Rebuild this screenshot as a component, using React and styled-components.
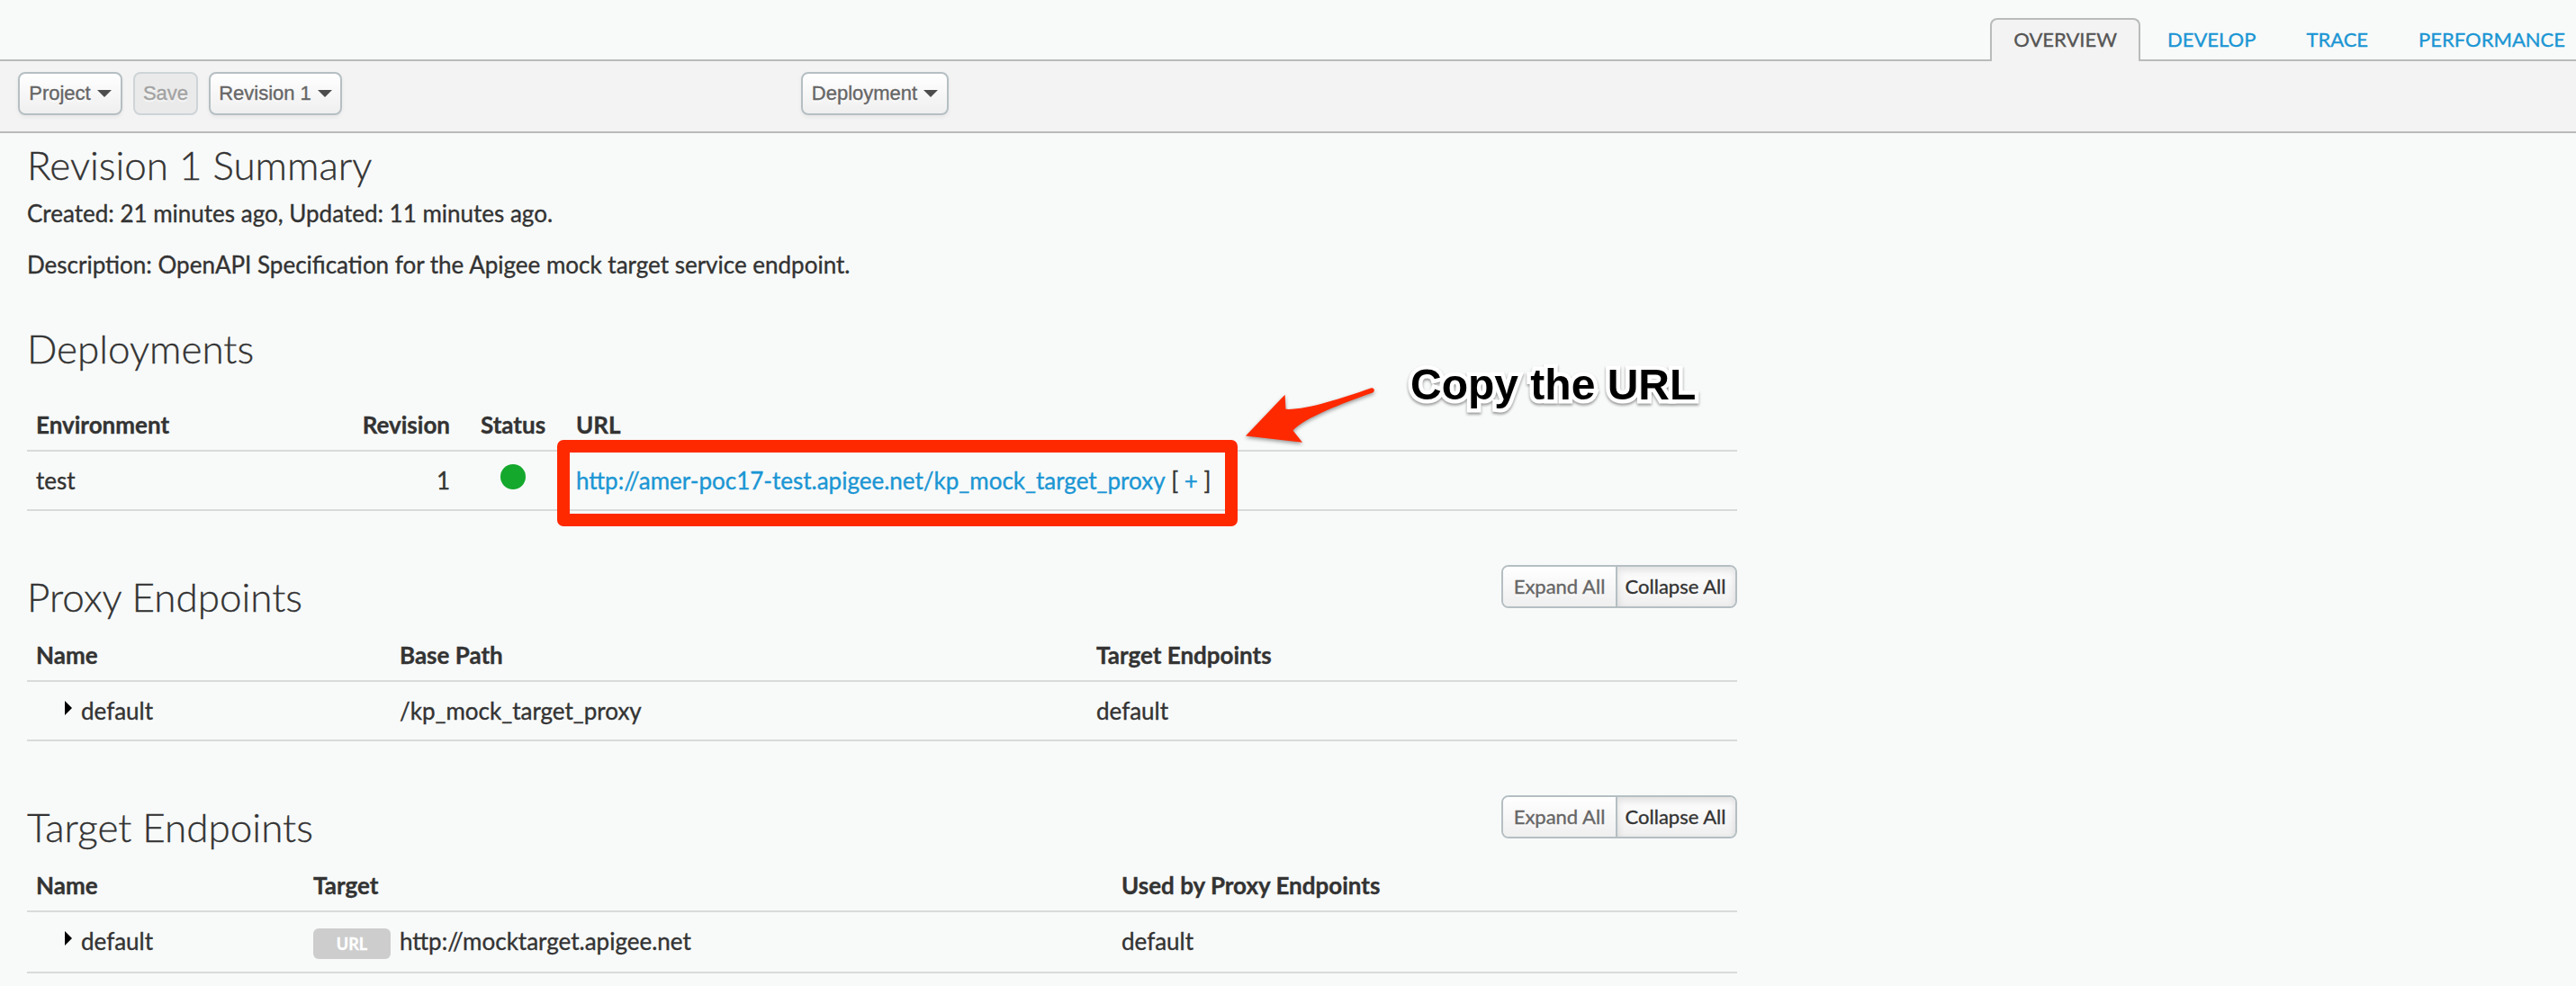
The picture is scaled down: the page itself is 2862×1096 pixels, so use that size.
import React from 'react';
import styled, { createGlobalStyle, css } from 'styled-components';

const GlobalStyle = createGlobalStyle`
  * { box-sizing: border-box; }
  body {
    margin: 0;
    background: #f8faf9;
    color: #333;
    font-family: Lato, "Liberation Sans", sans-serif;
    font-size: 26px;
    line-height: 40px;
    -webkit-text-stroke: 0.35px currentColor;
    overflow: hidden;
  }
`;

const Page = styled.div`
  position: relative;
  width: 2862px;
  height: 1096px;
  overflow: hidden;
  background: #f8faf9;
`;

const TabBar = styled.nav`
  display: flex;
  justify-content: flex-end;
  align-items: flex-end;
  gap: 4px;
  height: 68px;
  border-bottom: 2px solid #b9bbba;
  padding-top: 20px;
`;

const Tab = styled.a`
  flex: none;
  height: 48px;
  margin-bottom: -2px;
  padding: 2px 24px 0;
  border: 2px solid transparent;
  border-bottom: 0;
  border-radius: 8px 8px 0 0;
  font-size: 22px;
  line-height: 40px;
  color: #1b96d4;
  ${(p) => p.$active && css`
    color: #555;
    background: #f3f3f3;
    border-color: #b9bbba;
  `}
  &:last-child { margin-right: -14px; }
`;

const Toolbar = styled.div`
  display: flex;
  height: 80px;
  padding: 12px 20px 0;
  background: #f3f3f3;
  border-bottom: 2px solid #b9bbba;
`;

const ToolGroup = styled.div`
  display: flex;
  gap: 12px;
  width: ${(p) => p.$width || 'auto'};
`;

const Button = styled.button`
  display: flex;
  align-items: center;
  justify-content: center;
  gap: 7px;
  width: ${(p) => p.$width}px;
  height: 48px;
  padding: 0;
  font-family: "Liberation Sans", Arial, sans-serif;
  font-size: 22px;
  line-height: 44px;
  white-space: nowrap;
  color: #666;
  text-shadow: 0 2px 2px rgba(255, 255, 255, 0.75);
  background: linear-gradient(#ffffff, #efefef);
  border: 2px solid #b5bfc3;
  border-radius: 8px;
  box-shadow: 0 2px 4px rgba(0, 0, 0, 0.06);
  &:disabled {
    color: #a2a2a2;
    background: #eaeaea;
    border-color: #ced4d7;
    box-shadow: none;
  }
`;

const Caret = styled.span`
  width: 0;
  height: 0;
  border: 8px solid transparent;
  border-top-color: #4c4c4c;
  border-bottom: 0;
`;

const Content = styled.main`
  width: 1930px;
  padding: 9px 0 0 30px;
`;

const Heading = styled.h2`
  margin: 0;
  font-size: 44px;
  line-height: 52px;
  font-weight: 300;
`;

const Text = styled.p`
  margin: ${(p) => p.$top}px 0 0;
`;

const Section = styled.section`
  margin-top: ${(p) => p.$top}px;
`;

const SectionHead = styled.div`
  display: flex;
  justify-content: space-between;
  align-items: flex-start;
  padding-bottom: ${(p) => p.$gap}px;
  ${Heading} { margin-top: 9px; }
`;

const Toggle = styled.div`
  display: flex;
  height: 48px;
  border: 2px solid #b5bfc3;
  border-radius: 8px;
  overflow: hidden;
`;

const ToggleItem = styled.button`
  width: ${(p) => p.$width}px;
  padding: 0;
  border: 0;
  font: 22px/44px Lato, sans-serif;
  color: #666;
  text-shadow: 0 2px 2px rgba(255, 255, 255, 0.75);
  background: linear-gradient(#ffffff, #efefef);
  ${(p) => p.$active && css`
    color: #333;
    padding-right: 2px;
    border-left: 2px solid #b5bfc3;
    box-shadow: inset 0 4px 8px rgba(0, 0, 0, 0.13);
  `}
`;

const Row = styled.div`
  display: grid;
  grid-template-columns: ${(p) => p.$cols};
  height: ${(p) => p.$height || 66}px;
  padding: 12px 0 0 10px;
  border-bottom: 2px solid #d8dbda;
`;

const HeadRow = styled(Row)`
  height: 50px;
  padding-top: 0;
  font-weight: 700;
`;

const Cell = styled.div`
  display: flex;
  white-space: pre;
  justify-content: ${(p) => p.$align || 'flex-start'};
  padding-left: ${(p) => p.$indent || 0}px;
`;

const StatusDot = styled.span`
  width: 28px;
  height: 28px;
  margin-top: 2px;
  border-radius: 50%;
  background: #14a82c;
`;

const Link = styled.a`
  color: #1b96d4;
`;

const Disclosure = styled.span`
  width: 0;
  height: 0;
  margin: 9px 10px 0 0;
  border: 8px solid transparent;
  border-left-color: #000;
  border-right: 0;
`;

const Badge = styled.span`
  width: 86px;
  height: 34px;
  margin: 6px 10px 0 0;
  border-radius: 6px;
  background: #cdcdcd;
  color: #fff;
  font-size: 18px;
  font-weight: 700;
  line-height: 34px;
  text-align: center;
`;

const Highlight = styled.div`
  position: absolute;
  left: 619px;
  top: 489px;
  width: 756px;
  height: 96px;
  border: 14px solid #ff2900;
  border-radius: 7px;
`;

const Arrow = styled.svg`
  position: absolute;
  left: 1370px;
  top: 420px;
  filter: drop-shadow(0 2px 2px rgba(0, 0, 0, 0.4));
`;

const Callout = styled.div`
  position: absolute;
  left: 1567px;
  top: 400px;
  font: 700 48px/56px "Liberation Sans", Arial, sans-serif;
  white-space: nowrap;
  color: #000;
  -webkit-text-stroke: 9px #fff;
  paint-order: stroke fill;
  stroke-linejoin: round;
  filter: drop-shadow(0 2px 1.5px rgba(0, 0, 0, 0.4));
`;

const DEPLOY_COLS = '260px 200px 140px 1fr';
const PROXY_COLS = '404px 774px 1fr';
const TARGET_COLS = '308px 898px 1fr';

function ExpandToggle() {
  return (
    <Toggle>
      <ToggleItem $width={125}>Expand All</ToggleItem>
      <ToggleItem $width={133} $active>Collapse All</ToggleItem>
    </Toggle>
  );
}

function MenuButton({ width, children }) {
  return (
    <Button $width={width}>
      <span>{children}</span>
      <Caret />
    </Button>
  );
}

export default function App() {
  return (
    <Page>
      <GlobalStyle />
      <TabBar>
        <Tab $active>OVERVIEW</Tab>
        <Tab>DEVELOP</Tab>
        <Tab>TRACE</Tab>
        <Tab>PERFORMANCE</Tab>
      </TabBar>
      <Toolbar>
        <ToolGroup $width="870px">
          <MenuButton width={116}>Project</MenuButton>
          <Button $width={72} disabled>Save</Button>
          <MenuButton width={148}>Revision 1</MenuButton>
        </ToolGroup>
        <ToolGroup>
          <MenuButton width={164}>Deployment</MenuButton>
        </ToolGroup>
      </Toolbar>

      <Content>
        <Heading>Revision 1 Summary</Heading>
        <Text $top={8}>Created: 21 minutes ago, Updated: 11 minutes ago.</Text>
        <Text $top={17}>Description: OpenAPI Specification for the Apigee mock target service endpoint.</Text>

        <Section $top={38}>
          <SectionHead $gap={39}>
            <Heading>Deployments</Heading>
          </SectionHead>
          <HeadRow $cols={DEPLOY_COLS}>
            <Cell>Environment</Cell>
            <Cell $align="flex-end">Revision</Cell>
            <Cell $indent={34}>Status</Cell>
            <Cell>URL</Cell>
          </HeadRow>
          <Row $cols={DEPLOY_COLS}>
            <Cell>test</Cell>
            <Cell $align="flex-end">1</Cell>
            <Cell $indent={56}><StatusDot /></Cell>
            <Cell><Link>http://amer-poc17-test.apigee.net/kp_mock_target_proxy</Link> [ <Link>+</Link> ]</Cell>
          </Row>
        </Section>

        <Section $top={60}>
          <SectionHead $gap={19}>
            <Heading>Proxy Endpoints</Heading>
            <ExpandToggle />
          </SectionHead>
          <HeadRow $cols={PROXY_COLS}>
            <Cell>Name</Cell>
            <Cell>Base Path</Cell>
            <Cell>Target Endpoints</Cell>
          </HeadRow>
          <Row $cols={PROXY_COLS}>
            <Cell $indent={32}><Disclosure />default</Cell>
            <Cell>/kp_mock_target_proxy</Cell>
            <Cell>default</Cell>
          </Row>
        </Section>

        <Section $top={60}>
          <SectionHead $gap={19}>
            <Heading>Target Endpoints</Heading>
            <ExpandToggle />
          </SectionHead>
          <HeadRow $cols={TARGET_COLS}>
            <Cell>Name</Cell>
            <Cell>Target</Cell>
            <Cell>Used by Proxy Endpoints</Cell>
          </HeadRow>
          <Row $cols={TARGET_COLS} $height={68}>
            <Cell $indent={32}><Disclosure />default</Cell>
            <Cell><Badge>URL</Badge>http://mocktarget.apigee.net</Cell>
            <Cell>default</Cell>
          </Row>
        </Section>
      </Content>

      <Highlight />
      <Arrow width="170" height="90" viewBox="1370 420 170 90">
        <path
          d="M1384 484.5 L1427.6 438.7 L1428.5 454.8 C1450 456 1490 443 1523 431.5 C1527 430.5 1528 435 1525 436.5 C1490 449 1450 464 1436.5 478.5 L1447 491.7 Z"
          fill="#ff2900"
        />
      </Arrow>
      <Callout>Copy the URL</Callout>
    </Page>
  );
}
